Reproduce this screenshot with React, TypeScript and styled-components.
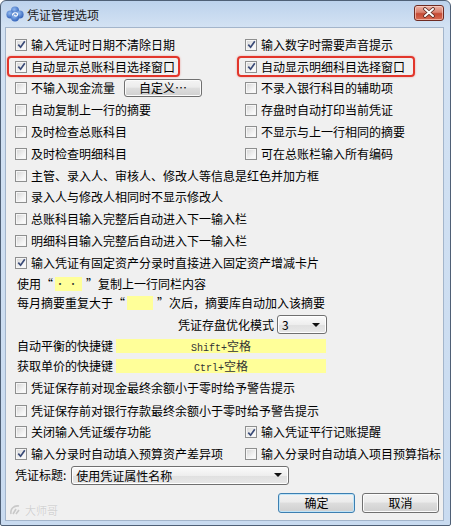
import styled, { createGlobalStyle } from 'styled-components';

const FONT = '"Noto Sans CJK SC", "Liberation Sans", sans-serif';

const GlobalStyle = createGlobalStyle`
  html, body {
    margin: 0;
    padding: 0;
    background: #ffffff;
  }
  body {
    font-family: ${FONT};
    font-size: 12px;
    color: #000;
  }
`;

type CheckProps = {
  checked?: boolean;
  label: string;
};

function Check({ checked, label }: CheckProps) {
  return (
    <CheckWrap>
      <Box>
        {checked && (
          <svg width="9" height="9" viewBox="0 0 9 9">
            <path d="M1.3 4.6 L3.6 7.2 L7.8 1.2" fill="none" stroke="#3a4b78" strokeWidth="1.7" />
          </svg>
        )}
      </Box>
      <Label>{label}</Label>
    </CheckWrap>
  );
}

function TitleIcon() {
  return (
    <svg width="18" height="16" viewBox="0 0 18 16">
      <defs>
        <radialGradient id="petal" cx="40%" cy="35%" r="70%">
          <stop offset="0" stopColor="#8fb8ee" />
          <stop offset="1" stopColor="#2f5fb8" />
        </radialGradient>
      </defs>
      <circle cx="9" cy="4.6" r="4" fill="url(#petal)" />
      <circle cx="4.4" cy="8.4" r="4" fill="url(#petal)" />
      <circle cx="13.6" cy="8.4" r="4" fill="url(#petal)" />
      <circle cx="9" cy="11.4" r="4" fill="url(#petal)" />
      <path d="M6.5 9.5 C6.5 6 11.5 6 11.5 8.5 C11.5 10.5 8.5 10.5 8.5 8.8" fill="none" stroke="#ffffff" strokeWidth="1.2" />
    </svg>
  );
}

function Dropdown({ value, width }: { value: string; width: number }) {
  return (
    <Combo $w={width}>
      <span>{value}</span>
      <Arrow />
    </Combo>
  );
}

export default function App() {
  return (
    <>
      <GlobalStyle />
      <Window>
        <TitleBar>
          <TitleIcon />
          <TitleText>凭证管理选项</TitleText>
          <CloseButton>
            <svg width="14" height="11" viewBox="0 0 14 11">
              <path d="M3 2 L11 9 M11 2 L3 9" stroke="#5a2a22" strokeWidth="3.6" strokeLinecap="round" />
              <path d="M3 2 L11 9 M11 2 L3 9" stroke="#ffffff" strokeWidth="2" strokeLinecap="round" />
            </svg>
          </CloseButton>
        </TitleBar>

        <Client>
          <PairRow>
            <Check checked label="输入凭证时日期不清除日期" />
            <Check checked label="输入数字时需要声音提示" />
          </PairRow>
          <PairRow>
            <Cell>
              <Check checked label="自动显示总账科目选择窗口" />
              <Highlight $w={173} />
            </Cell>
            <Cell>
              <Check checked label="自动显示明细科目选择窗口" />
              <Highlight $w={178} />
            </Cell>
          </PairRow>
          <PairRow>
            <Cell>
              <Check label="不输入现金流量" />
              <SmallButton>自定义…</SmallButton>
            </Cell>
            <Check label="不录入银行科目的辅助项" />
          </PairRow>
          <PairRow>
            <Check label="自动复制上一行的摘要" />
            <Check label="存盘时自动打印当前凭证" />
          </PairRow>
          <PairRow>
            <Check label="及时检查总账科目" />
            <Check label="不显示与上一行相同的摘要" />
          </PairRow>
          <PairRow>
            <Check label="及时检查明细科目" />
            <Check label="可在总账栏输入所有编码" />
          </PairRow>

          <Row>
            <Check label="主管、录入人、审核人、修改人等信息是红色并加方框" />
          </Row>
          <Row>
            <Check label="录入人与修改人相同时不显示修改人" />
          </Row>
          <Row>
            <Check label="总账科目输入完整后自动进入下一输入栏" />
          </Row>
          <Row>
            <Check label="明细科目输入完整后自动进入下一输入栏" />
          </Row>
          <Row>
            <Check checked label="输入凭证有固定资产分录时直接进入固定资产增减卡片" />
          </Row>

          <Row $h={19.6} $indent={2}>
            <Label>使用“</Label>
            <Yellow $w={27} $dots>··</Yellow>
            <Label>”复制上一行同栏内容</Label>
          </Row>
          <Row $h={20} $indent={2}>
            <Label>每月摘要重复大于“</Label>
            <Yellow $w={26} />
            <Label>”次后，摘要库自动加入该摘要</Label>
          </Row>
          <Row $h={22.6} $indent={163}>
            <Label>凭证存盘优化模式</Label>
            <Gap $w={3} />
            <Dropdown value="3" width={50} />
          </Row>
          <Row $h={20} $indent={2}>
            <Label>自动平衡的快捷键</Label>
            <Yellow $w={210} $center>
              <Mono>Shift+</Mono>空格
            </Yellow>
          </Row>
          <Row $h={20} $indent={2}>
            <Label>获取单价的快捷键</Label>
            <Yellow $w={210} $center>
              <Mono>Ctrl+</Mono>空格
            </Yellow>
          </Row>

          <Row $h={24}>
            <Check label="凭证保存前对现金最终余额小于零时给予警告提示" />
          </Row>
          <Row $h={21.5}>
            <Check label="凭证保存前对银行存款最终余额小于零时给予警告提示" />
          </Row>
          <PairRow $h={21.5}>
            <Check label="关闭输入凭证缓存功能" />
            <Check checked label="输入凭证平行记账提醒" />
          </PairRow>
          <PairRow $h={21.5}>
            <Check checked label="输入分录时自动填入预算资产差异项" />
            <Check label="输入分录时自动填入项目预算指标" />
          </PairRow>
          <Row $h={21.5}>
            <Label>凭证标题:</Label>
            <Gap $w={5} />
            <Dropdown value="使用凭证属性名称" width={218} />
          </Row>

          <ButtonBar>
            <DialogButton $default>确定</DialogButton>
            <DialogButton>取消</DialogButton>
          </ButtonBar>

          <Watermark>
            <svg width="14" height="12" viewBox="0 0 14 12">
              <path d="M2 10 C1 5 5 1 10 2 M4 10 L7 5 M7 10 L10 6" fill="none" stroke="#c9c9c9" strokeWidth="1.6" />
            </svg>
            大师哥
          </Watermark>
        </Client>
      </Window>
    </>
  );
}

const Window = styled.div`
  width: 451px;
  height: 526px;
  box-sizing: border-box;
  border: 1px solid #4f6076;
  border-radius: 6px 6px 2px 2px;
  background: linear-gradient(#bcd2ec, #d3e2f3 26px, #c9dbf0);
  padding: 0 6px 4px 4px;
  display: flex;
  flex-direction: column;
`;

const TitleBar = styled.div`
  height: 26px;
  flex: none;
  display: flex;
  align-items: center;
  padding-left: 1px;
`;

const TitleText = styled.div`
  margin-left: 3px;
  font-size: 12px;
  color: #1a1a1a;
  flex: 1;
`;

const CloseButton = styled.div`
  width: 30px;
  height: 16px;
  margin-top: -3px;
  box-sizing: border-box;
  border: 1px solid #6e2b22;
  border-radius: 3px;
  background: linear-gradient(#eeb3a6, #d9816f 45%, #c54a35 55%, #d86b53);
  box-shadow: inset 0 0 0 1px rgba(255, 220, 210, 0.6);
  display: flex;
  align-items: center;
  justify-content: center;
`;

const Client = styled.div`
  flex: 1;
  position: relative;
  box-sizing: border-box;
  background: #f0f0f0;
  border: 1px solid #a3b5cb;
  padding: 6px 0 0 9px;
`;

const Row = styled.div<{ $h?: number; $indent?: number }>`
  height: ${({ $h }) => $h ?? 21.8}px;
  display: flex;
  align-items: center;
  padding-left: ${({ $indent }) => $indent ?? 0}px;
`;

const PairRow = styled.div<{ $h?: number }>`
  height: ${({ $h }) => $h ?? 21.8}px;
  display: grid;
  grid-template-columns: 230px 1fr;
  align-items: center;
`;

const Cell = styled.div`
  position: relative;
  display: flex;
  align-items: center;
`;

const CheckWrap = styled.div`
  display: flex;
  align-items: center;
`;

const Box = styled.span`
  width: 12px;
  height: 12px;
  flex: none;
  box-sizing: border-box;
  margin-right: 4px;
  border: 1px solid #8e8f8f;
  background: linear-gradient(135deg, #d4d4d4, #f4f4f4 65%, #ffffff);
  box-shadow: inset 0 0 0 1px #f6f6f6;
  display: inline-flex;
  align-items: center;
  justify-content: center;
`;

const Label = styled.span`
  font-size: 12px;
  line-height: 14px;
  white-space: nowrap;
  color: #000;
`;

const Highlight = styled.div<{ $w: number }>`
  position: absolute;
  left: -8px;
  top: calc(50% - 11px);
  width: ${({ $w }) => $w}px;
  height: 21px;
  box-sizing: border-box;
  border: 2px solid #e2362b;
  border-radius: 4px;
  box-shadow: 0 0 2px rgba(230, 40, 30, 0.45);
  pointer-events: none;
`;

const SmallButton = styled.div`
  margin-left: 9px;
  width: 78px;
  height: 18px;
  box-sizing: border-box;
  border: 1px solid #707070;
  border-radius: 3px;
  background: linear-gradient(#f4f4f4, #ececec 45%, #dedede 50%, #d0d0d0);
  box-shadow: inset 0 0 0 1px #fbfbfb;
  font-size: 12px;
  line-height: 16px;
  text-align: center;
`;

const Yellow = styled.div<{ $w: number; $center?: boolean; $dots?: boolean }>`
  width: ${({ $w }) => $w}px;
  height: 14px;
  flex: none;
  margin: ${({ $center }) => ($center ? '0 0 0 3px' : '0 4px 0 2px')};
  background: #ffff99;
  font-size: ${({ $dots }) => ($dots ? '9px' : '12px')};
  line-height: 14px;
  text-align: center;
  color: #333;
  letter-spacing: ${({ $dots }) => ($dots ? '4px' : '0')};
`;

const Mono = styled.span`
  font-family: "Liberation Mono", "DejaVu Sans Mono", monospace;
  font-size: 10px;
`;

const Gap = styled.span<{ $w: number }>`
  width: ${({ $w }) => $w}px;
  flex: none;
`;

const Combo = styled.div<{ $w: number }>`
  width: ${({ $w }) => $w}px;
  height: 19px;
  box-sizing: border-box;
  border: 1px solid #707070;
  border-radius: 3px;
  background: linear-gradient(#fbfbfb, #eeeeee 50%, #e0e0e0 51%, #e8e8e8);
  box-shadow: inset 0 0 0 1px #ffffff;
  display: flex;
  align-items: center;
  justify-content: space-between;
  padding: 0 6px 0 4px;
  font-size: 12px;
`;

const Arrow = styled.span`
  width: 0;
  height: 0;
  border-left: 4px solid transparent;
  border-right: 4px solid transparent;
  border-top: 4px solid #111;
`;

const ButtonBar = styled.div`
  display: flex;
  justify-content: flex-end;
  gap: 7px;
  margin-top: 7px;
  padding-right: 4px;
`;

const DialogButton = styled.button<{ $default?: boolean }>`
  width: 77px;
  height: 20px;
  padding: 0;
  box-sizing: border-box;
  font-family: ${FONT};
  font-size: 12px;
  color: #000;
  border: 1px solid ${({ $default }) => ($default ? '#3c7fb1' : '#707070')};
  border-radius: 3px;
  background: linear-gradient(#f3f3f3, #ebebeb 45%, #dddddd 50%, #cfcfcf);
  box-shadow: inset 0 0 0 1px ${({ $default }) => ($default ? '#bfe4f8' : '#fcfcfc')};
`;

const Watermark = styled.div`
  position: absolute;
  left: 3px;
  bottom: 2px;
  display: flex;
  align-items: center;
  gap: 2px;
  font-size: 11px;
  color: #d2d2d2;
  text-shadow: 0 0 1px #ffffff;
`;
